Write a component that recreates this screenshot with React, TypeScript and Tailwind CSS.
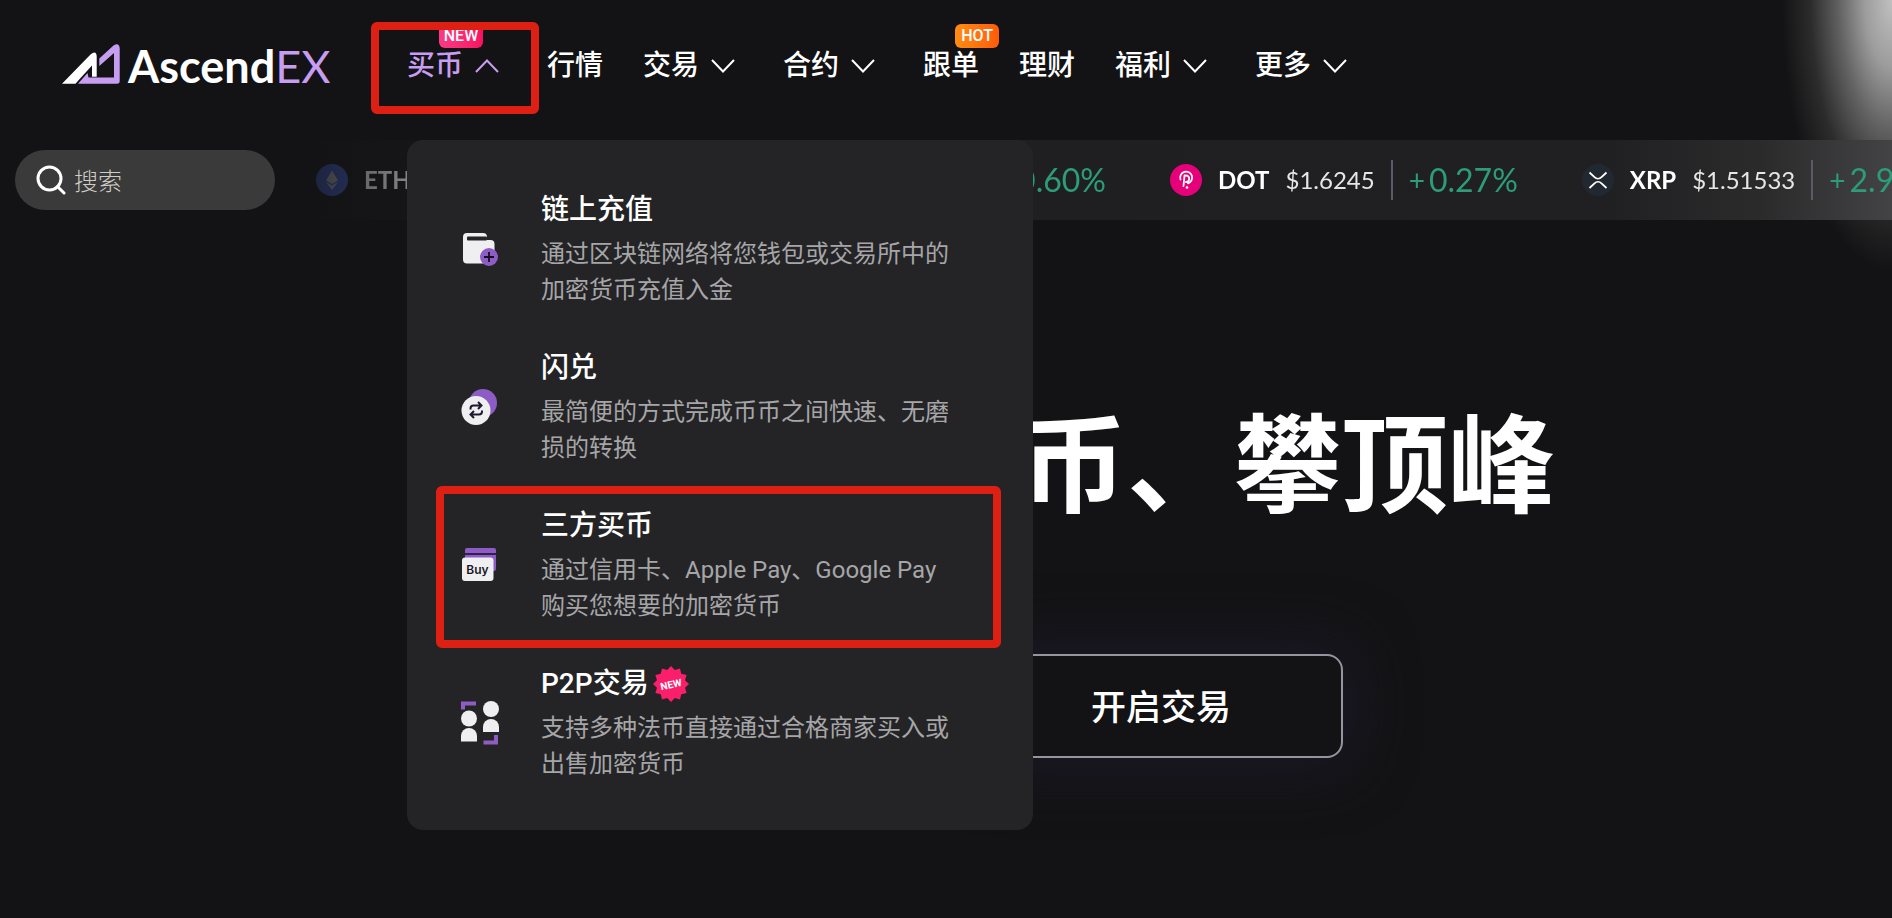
import { useState } from 'react';
import type { ReactNode } from 'react';

interface NavItem {
  label: string;
  arrow?: boolean;
  badge?: 'NEW' | 'HOT';
}

interface Coin {
  name: string;
  price: string;
  change: string;
  icon: ReactNode;
  width?: string;
}

interface MenuEntry {
  title: string;
  desc: string;
  icon: ReactNode;
  isNew?: boolean;
  marked?: boolean;
}

const navItems: NavItem[] = [
  { label: '买币', arrow: true, badge: 'NEW' },
  { label: '行情' },
  { label: '交易', arrow: true },
  { label: '合约', arrow: true },
  { label: '跟单', badge: 'HOT' },
  { label: '理财' },
  { label: '福利', arrow: true },
  { label: '更多', arrow: true },
];

function EthIcon() {
  return (
    <svg viewBox="0 0 32 32" className="size-8 shrink-0">
      <circle cx="16" cy="16" r="16" fill="#4260d0" />
      <path d="M16 6.500 22 16.500 16 20 10 16.500Z" fill="#b9bcc8" />
      <path d="M16 21.500 22 18 16 26 10 18Z" fill="#b9bcc8" />
    </svg>
  );
}

function BtcIcon() {
  return (
    <svg viewBox="0 0 32 32" className="size-8 shrink-0">
      <circle cx="16" cy="16" r="16" fill="#f7931a" />
      <path d="M12 9v14M12 9h5a3.500 3.500 0 0 1 0 7h-5M17 16a3.500 3.500 0 0 1 0 7h-5" fill="none" stroke="#fff" strokeWidth="2" />
    </svg>
  );
}

function DotIcon() {
  return (
    <svg viewBox="0 0 32 32" className="size-8 shrink-0">
      <circle cx="16" cy="16" r="16" fill="#e6007a" />
      <path
        d="M10.500 15.500A6 6 0 1 1 18 19.300M14.500 11.500 13.500 22M14.500 11.500h1.500a3.200 3.200 0 0 1 0 6.500"
        fill="none"
        stroke="#fff"
        strokeWidth="1.800"
        strokeLinecap="round"
      />
      <circle cx="17" cy="23.500" r="1.300" fill="#fff" />
    </svg>
  );
}

function XrpIcon() {
  return (
    <svg viewBox="0 0 32 32" className="size-8 shrink-0">
      <circle cx="16" cy="16" r="16" fill="#222831" />
      <path
        d="M7.500 8.500 12.500 13.200a5 5 0 0 0 7 0L24.500 8.500M7.500 24 12.500 19.300a5 5 0 0 1 7 0L24.500 24"
        fill="none"
        stroke="#fff"
        strokeWidth="1.800"
      />
    </svg>
  );
}

const coins: Coin[] = [
  { name: 'ETH', price: '$2315.47', change: '1.35%', icon: <EthIcon />, width: 'w-[363px]' },
  { name: 'BTC', price: '$76180.1', change: '0.60%', icon: <BtcIcon />, width: 'w-[363px]' },
  { name: 'DOT', price: '$1.6245', change: '0.27%', icon: <DotIcon /> },
  { name: 'XRP', price: '$1.51533', change: '2.98%', icon: <XrpIcon /> },
];

function DepositIcon() {
  return (
    <svg viewBox="0 0 48 48" className="size-12 shrink-0">
      <path d="M11 8H27a4 4 0 0 1 4 4V15h3.500a4 4 0 0 1 4 4V38.500H11a4 4 0 0 1-4-4V12a4 4 0 0 1 4-4Z" fill="#efeff1" />
      <rect x="11" y="11.500" width="20" height="4" rx="1" fill="#242426" />
      <circle cx="33" cy="32" r="9" fill="#8d5cc4" />
      <path d="M33 27v10M28 32h10" stroke="#150d20" strokeWidth="1.800" />
    </svg>
  );
}

function ConvertIcon() {
  return (
    <svg viewBox="0 0 48 48" className="size-12 shrink-0">
      <circle cx="27" cy="20" r="14" fill="#8d5cc4" />
      <circle cx="20" cy="27.500" r="14.500" fill="#efeff1" />
      <path
        d="M14.500 26.500v-1a3 3 0 0 1 3-3H25M22 19l3.500 3.500L22 26M26 27.500v1a3 3 0 0 1-3 3H15M18 28l-3.500 3.500L18 35"
        fill="none"
        stroke="#1d1a2e"
        strokeWidth="2"
      />
    </svg>
  );
}

function BuyIcon() {
  return (
    <svg viewBox="0 0 48 48" className="size-12 shrink-0">
      <path d="M11 7H38a2 2 0 0 1 2 2V28a2 2 0 0 1-2 2H9V9a2 2 0 0 1 2-2Z" fill="#8d5cc4" />
      <path d="M9 13H40" stroke="#150d20" strokeWidth="1.500" />
      <rect x="6" y="16.500" width="31.500" height="23.500" rx="3" fill="#efeff1" />
      <text x="21.500" y="32.500" textAnchor="middle" fontSize="12" fontWeight="600" fontFamily="Inter, sans-serif" fill="#17151f">
        Buy
      </text>
    </svg>
  );
}

function P2pIcon() {
  return (
    <svg viewBox="0 0 48 48" className="size-12 shrink-0">
      <path d="M7 10.500V4.500H20M40 36V43.500H27.500" fill="none" stroke="#8d5cc4" strokeWidth="4" />
      <circle cx="13" cy="19.500" r="8" fill="#efeff1" />
      <path d="M5 42.500V37a8 8 0 0 1 16 0v5.500Z" fill="#efeff1" />
      <circle cx="35" cy="10" r="8" fill="#efeff1" />
      <path d="M27 33V28a8 8 0 0 1 16 0v5Z" fill="#efeff1" />
    </svg>
  );
}

const menuEntries: MenuEntry[] = [
  { title: '链上充值', desc: '通过区块链网络将您钱包或交易所中的加密货币充值入金', icon: <DepositIcon /> },
  { title: '闪兑', desc: '最简便的方式完成币币之间快速、无磨损的转换', icon: <ConvertIcon /> },
  { title: '三方买币', desc: '通过信用卡、Apple Pay、Google Pay 购买您想要的加密货币', icon: <BuyIcon />, marked: true },
  { title: 'P2P交易', desc: '支持多种法币直接通过合格商家买入或出售加密货币', icon: <P2pIcon />, isNew: true },
];

function Logo() {
  return (
    <a href="#" aria-label="AscendEX" className="flex w-[345px] shrink-0 items-start gap-2">
      <svg viewBox="0 0 58 40" className="h-10 w-[58px] shrink-0">
        <path d="M0 39.700 28.500 10.500Q34 6 34.700 12V32.700H30V21.500L19 33.500 13.500 39.700Z" fill="#fff" />
        <path d="M37.300 22V14.500L51.500 1.500Q57-2 57.700 4V37Q57.700 39.700 55 39.700H16L25.500 29 26.500 33.500H52V9Z" fill="#c79df2" />
      </svg>
      <span className="font-[Lato] text-[45px] leading-[44px] font-bold text-white">
        Ascend<span className="font-normal text-[#c79df2]">EX</span>
      </span>
    </a>
  );
}

function Chevron({ up }: { up?: boolean }) {
  return (
    <svg viewBox="0 0 24 14" className="mr-2 ml-3 h-[14px] w-6" fill="none" stroke="currentColor" strokeWidth="2">
      <path d={up ? 'M1 13 12 1.500 23 13' : 'M1 1 12 12.500 23 1'} />
    </svg>
  );
}

function Badge({ text }: { text: 'NEW' | 'HOT' }) {
  const color = text === 'HOT' ? 'from-[#ff8c12] to-[#ff5a0a]' : 'from-[#f93a86] to-[#fb0f5f]';
  return (
    <span
      className={`absolute -top-5 left-8 flex h-6 w-11 items-center justify-center rounded-md bg-linear-to-r font-[Roboto] text-base font-medium text-white ${color}`}
    >
      {text}
    </span>
  );
}

function NewStar() {
  const points = Array.from({ length: 24 }, (_, i) => {
    const r = i % 2 ? 14.5 : 18;
    const a = (i * Math.PI) / 12;
    return `${18 + r * Math.sin(a)},${18 - r * Math.cos(a)}`;
  }).join(' ');
  return (
    <svg viewBox="0 0 36 36" className="ml-1 size-9">
      <polygon points={points} fill="#fb1f6b" />
      <text x="18" y="22" textAnchor="middle" transform="rotate(-12 18 18)" fontSize="10" fontWeight="700" fontFamily="Roboto, sans-serif" fill="#fff">
        NEW
      </text>
    </svg>
  );
}

function BuyMenu() {
  return (
    <ul className="absolute top-24 left-0 z-20 flex w-[626px] flex-col gap-10 rounded-2xl bg-[#242426] pt-[50px] pr-[72px] pb-12 pl-[49px]">
      {menuEntries.map((entry) => (
        <li key={entry.title} className="relative">
          <a href="#" className="flex items-center gap-[37px]">
            {entry.icon}
            <div className="flex-1">
              <h2 className="flex items-center text-[28px] leading-10 font-medium text-white">
                {entry.title}
                {entry.isNew && <NewStar />}
              </h2>
              <p className="mt-1.5 text-2xl leading-9 font-normal text-[#a6a6a8]">{entry.desc}</p>
            </div>
          </a>
          {entry.marked && (
            <span className="pointer-events-none absolute -top-5 -right-10 -bottom-6 -left-5 rounded-md border-8 border-[#dd2013]" />
          )}
        </li>
      ))}
    </ul>
  );
}

export default function App() {
  const [open, setOpen] = useState(true);

  return (
    <div className="relative min-h-screen overflow-hidden bg-[#131315] font-[Roboto,'Noto_Sans_CJK_SC',sans-serif] text-white">
      <div className="pointer-events-none absolute top-0 right-0 h-72 w-52 bg-[radial-gradient(ellipse_110px_270px_at_100%_0,#c0c0c0_0%,#9c9c9c_25%,#626262_48%,#2c2c2c_74%,#131315_100%)]" />

      <header className="relative z-20 flex h-[140px] items-start pt-11 pl-[62px]">
        <Logo />
        <nav className="flex gap-10">
          {navItems.map((item) => (
            <div key={item.label} className="relative">
              <button
                type="button"
                onClick={() => item.badge === 'NEW' && setOpen(!open)}
                className={`flex items-center text-[28px] leading-[43px] font-medium whitespace-nowrap ${
                  item.badge === 'NEW' ? 'text-[#c79df2]' : 'text-white'
                }`}
              >
                {item.label}
                {item.arrow && <Chevron up={item.badge === 'NEW' && open} />}
              </button>
              {item.badge && <Badge text={item.badge} />}
              {item.badge === 'NEW' && open && <BuyMenu />}
              {item.badge === 'NEW' && (
                <span className="pointer-events-none absolute -top-[22px] -left-9 h-[92px] w-[168px] rounded-md border-8 border-[#dd2013]" />
              )}
            </div>
          ))}
        </nav>
      </header>

      <div className="relative flex h-20 items-center pl-[15px]">
        <label className="flex h-[60px] w-[260px] shrink-0 items-center gap-2 rounded-full bg-[#3a3a3a] pl-[21px]">
          <svg viewBox="0 0 30 30" className="size-[30px] shrink-0" fill="none" stroke="#fff" strokeWidth="3">
            <circle cx="13.500" cy="13.500" r="11.500" />
            <path d="M21.500 21.500 28 28" strokeLinecap="round" />
          </svg>
          <input
            type="text"
            aria-label="搜索"
            placeholder="搜索"
            className="w-40 bg-transparent pt-1 text-2xl font-light outline-none placeholder:text-[#d0ccc6]"
          />
        </label>
        <div className="ml-[25px] h-20 min-w-0 flex-1 overflow-hidden bg-[linear-gradient(90deg,transparent,#1f1f21_35%,#202022_82%,#2b2b2c_92%,#434345_100%)]">
          <ul className="flex h-20 items-center gap-16 pl-4 font-[Lato] [mask-image:linear-gradient(90deg,rgb(0_0_0/0.24)_20px,rgb(0_0_0/0.45)_100px,#000_300px)]">
            {coins.map((coin) => (
              <li key={coin.name} className={`flex shrink-0 items-center gap-4 ${coin.width ?? ''}`}>
                {coin.icon}
                <span className="text-2xl font-bold">{coin.name}</span>
                <span className="text-2xl text-[#e6e6e6]">{coin.price}</span>
                <span className="h-10 w-0.5 bg-[#5c5a68]" />
                <span className="ml-auto flex items-center gap-1 text-[32px] text-[#2c9c79]">
                  <span className="text-[28px]">+</span>
                  {coin.change}
                </span>
              </li>
            ))}
          </ul>
        </div>
      </div>

      <main className="px-8 pt-[168px]">
        <div className="mx-auto max-w-[1218px]">
          <h1 className="text-right text-[107px] leading-[160px] font-bold whitespace-nowrap">币、攀顶峰</h1>
        </div>
        <div className="mx-auto mt-[106px] flex max-w-[794px] justify-end">
          <button
            type="button"
            className="h-[104px] w-[364px] rounded-2xl border-2 border-[#96949c] bg-[#131315] pt-1.5 text-[35px] font-medium shadow-[0_0_60px_10px_#1c1826]"
          >
            开启交易
          </button>
        </div>
      </main>
    </div>
  );
}
